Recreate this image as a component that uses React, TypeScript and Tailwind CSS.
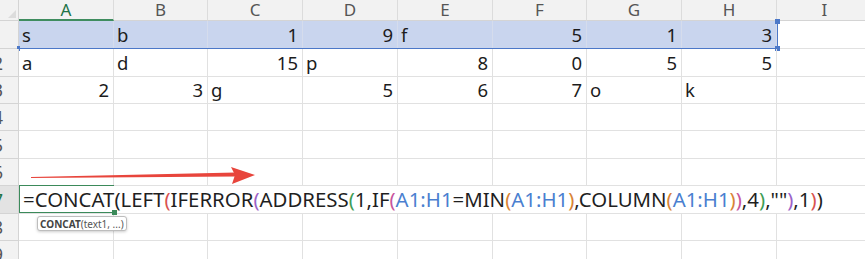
import type { ReactNode } from 'react'

type Cell = { v: string; num?: boolean }

const COLS = [
  { key: 'A', w: 'w-[95px]' },
  { key: 'B', w: 'w-[94px]' },
  { key: 'C', w: 'w-[95px]' },
  { key: 'D', w: 'w-[95px]' },
  { key: 'E', w: 'w-[95px]' },
  { key: 'F', w: 'w-[94px]' },
  { key: 'G', w: 'w-[95px]' },
  { key: 'H', w: 'w-[95px]' },
]

const ROW_H = ['h-[28px]', 'h-[28px]', 'h-[27px]', 'h-[27px]', 'h-[28px]', 'h-[27px]', 'h-[28px]', 'h-[27px]', 'h-[27px]']

const s = (v: string): Cell => ({ v })
const n = (v: string): Cell => ({ v, num: true })

const DATA: Cell[][] = [
  [s('s'), s('b'), n('1'), n('9'), s('f'), n('5'), n('1'), n('3')],
  [s('a'), s('d'), n('15'), s('p'), n('8'), n('0'), n('5'), n('5')],
  [n('2'), n('3'), s('g'), n('5'), n('6'), n('7'), s('o'), s('k')],
]

// paren colours by nesting depth
const C = {
  red: 'text-[#d9534f]',
  purple: 'text-[#9b63c8]',
  green: 'text-[#3f9d55]',
  pink: 'text-[#c8559c]',
  orange: 'text-[#d98435]',
  ref: 'text-[#4a7fd0]',
}

function Formula() {
  const seg: [string, string][] = [
    ['=CONCAT(LEFT', ''],
    ['(', C.red],
    ['IFERROR', ''],
    ['(', C.purple],
    ['ADDRESS', ''],
    ['(', C.green],
    ['1,IF', ''],
    ['(', C.pink],
    ['A1:H1', C.ref],
    ['=MIN', ''],
    ['(', C.orange],
    ['A1:H1', C.ref],
    [')', C.orange],
    [',COLUMN', ''],
    ['(', C.orange],
    ['A1:H1', C.ref],
    [')', C.orange],
    [')', C.pink],
    [',4', ''],
    [')', C.green],
    [',""', ''],
    [')', C.purple],
    [',1', ''],
    [')', C.red],
    [')', ''],
  ]
  return (
    <span className="whitespace-nowrap text-[20.4px] text-[#1f1f1f] font-['Noto_Sans',sans-serif]">
      {seg.map(([t, c], i) => (
        <span key={i} className={c}>
          {t}
        </span>
      ))}
    </span>
  )
}

function RowHead({ label, active, h }: { label: string; active?: boolean; h: string }) {
  return (
    <div
      className={`${h} w-[19px] shrink-0 overflow-hidden border-r border-b border-[#d4d4d4] flex items-center justify-end pr-[15px] ${
        active ? 'bg-[#e3e3e3] text-[#217346]' : 'bg-[#f2f2f2] text-[#555]'
      }`}
    >
      <span className="text-[18px] leading-none shrink-0">{label}</span>
    </div>
  )
}

function GridCell({ w, h, children, num, sel }: { w: string; h: string; children?: ReactNode; num?: boolean; sel?: boolean }) {
  return (
    <div
      className={`${w} ${h} shrink-0 border-r border-b flex items-center pl-[3px] pr-[4px] text-[18.5px] text-[#1c1c1c] ${
        num ? 'justify-end' : 'justify-start'
      } ${sel ? 'bg-[#c9d5ee] border-[#d5dcec]' : 'border-[#e1e1e1]'}`}
    >
      {children}
    </div>
  )
}

export default function App() {
  return (
    <div className="relative w-[865px] h-[259px] overflow-hidden bg-white font-['Noto_Sans',sans-serif]">
      {/* column headers */}
      <div className="flex h-[21px]">
        <div className="relative w-[19px] h-[21px] shrink-0 bg-[#f2f2f2] border-r border-b border-[#d4d4d4]">
          <div className="absolute right-[2px] bottom-[2px] w-0 h-0 border-l-[8px] border-l-transparent border-b-[8px] border-b-[#dcdcdc]" />
        </div>
        {COLS.map((c, i) => (
          <div
            key={c.key}
            className={`${c.w} h-[21px] shrink-0 bg-[#f2f2f2] border-r border-[#dcdcdc] flex items-center justify-center text-[17px] leading-[18px] ${
              i === 0 ? 'text-[#217346] border-b-2 border-b-[#3f8d5f]' : 'text-[#555] border-b border-b-[#d4d4d4]'
            }`}
          >
            {c.key}
          </div>
        ))}
        <div className="w-[95px] shrink-0 h-[21px] bg-[#f2f2f2] border-b border-[#d4d4d4] flex items-center justify-center text-[17px] leading-[18px] text-[#555]">
          I
        </div>
      </div>

      {/* rows */}
      {ROW_H.map((h, r) => (
        <div key={r} className="relative flex">
          <RowHead label={String(r + 1)} h={h} active={r === 6} />
          {COLS.map((c, ci) => {
            const cell = DATA[r]?.[ci]
            return (
              <GridCell key={c.key} w={c.w} h={h} num={cell?.num} sel={r === 0}>
                {cell?.v}
              </GridCell>
            )
          })}
          <div className={`flex-1 ${h} border-b border-[#e1e1e1]`} />

          {/* row 1 selection outline */}
          {r === 0 && (
            <div className="absolute left-[19px] top-0 w-[759px] h-[28px] border-b-[1.5px] border-r-[1.5px] border-[#4c78c8] pointer-events-none">
              <div className="absolute -right-[3px] -top-[2px] w-[5px] h-[5px] bg-[#4c78c8]" />
              <div className="absolute -right-[3px] -bottom-[3px] w-[5px] h-[5px] bg-[#4c78c8]" />
              <div className="absolute -left-[2px] -bottom-[3px] w-[3px] h-[5px] bg-[#4c78c8]" />
            </div>
          )}

          {/* active cell with formula editor */}
          {r === 6 && (
            <>
              <div className="absolute left-[20px] top-0 h-[27px] flex items-center bg-white pl-[3px] pr-[6px] z-10">
                <Formula />
              </div>
              <div className="absolute left-[19px] -top-[1px] w-[95px] h-[28px] border-[1.5px] border-r-0 border-[#3b8a5a] pointer-events-none z-20">
                <div className="absolute -right-[3px] -bottom-[3px] w-[5px] h-[5px] bg-[#3b8a5a]" />
              </div>
              <div className="absolute left-[37px] top-[30px] z-30 rounded-[3px] border border-[#bdbdbd] bg-white shadow-[0_1px_3px_rgba(0,0,0,0.2)] px-[2px] h-[15px] flex items-center text-[10px] leading-none text-[#555]">
                <span className="font-bold text-[#444]">CONCAT</span>
                <span>(text1, ...)</span>
              </div>
            </>
          )}
        </div>
      ))}

      {/* red annotation arrow */}
      <svg className="absolute left-0 top-0 pointer-events-none" width="865" height="259">
        <polygon points="31,177 31,178 236,176.5 236,172.5" fill="#e8453c" />
        <polygon points="231,167 255,175 232,184 235,175" fill="#e8453c" />
      </svg>
    </div>
  )
}
